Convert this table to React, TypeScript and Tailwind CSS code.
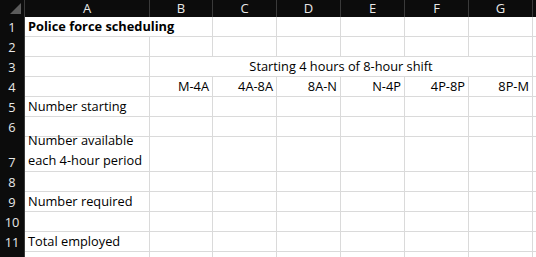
const cols = ["A", "B", "C", "D", "E", "F", "G"];
const shifts = ["M-4A", "4A-8A", "8A-N", "N-4P", "4P-8P", "8P-M"];

const cell =
  "min-w-0 whitespace-nowrap border-r border-b border-[#dadada] bg-white flex items-end px-[3px] pb-[1px] leading-[18px]";
const rowHead =
  "bg-[#0c0c0c] text-[#e8e8e8] border-r border-[#3a3a3a] flex items-end justify-center pb-[1px] leading-[18px]";

function Blank({ n }: { n: number }) {
  return (
    <>
      {Array.from({ length: n }).map((_, i) => (
        <div key={i} className={cell} />
      ))}
    </>
  );
}

export default function App() {
  return (
    <div
      className="w-[536px] h-[257px] overflow-hidden bg-white text-[12.8px] text-black"
      style={{ fontFamily: '"Open Sans", "Liberation Sans", sans-serif' }}
    >
      <div className="grid grid-cols-[25px_125px_63px_64px_64px_64px_64px_64px_1fr] grid-rows-[17px_20px_20px_20px_20px_20px_20px_35px_20px_20px_20px_20px_20px]">
        {/* column headers */}
        <div className="bg-[#0c0c0c] border-r border-[#3a3a3a] relative">
          <div className="absolute right-[3px] bottom-[3px] w-0 h-0 border-l-[11px] border-l-transparent border-b-[11px] border-b-[#5c5c5c]" />
        </div>
        {cols.map((c) => (
          <div
            key={c}
            className="bg-[#0c0c0c] text-[#e8e8e8] border-r border-[#3a3a3a] flex items-center justify-center text-[13px] leading-none"
          >
            {c}
          </div>
        ))}
        <div className="bg-[#0c0c0c]" />

        {/* 1 */}
        <div className={rowHead}>1</div>
        <div className={`${cell} col-span-2 font-bold`}>Police force scheduling</div>
        <Blank n={6} />

        {/* 2 */}
        <div className={rowHead}>2</div>
        <Blank n={8} />

        {/* 3 */}
        <div className={rowHead}>3</div>
        <div className={cell} />
        <div className={`${cell} col-span-6 justify-center`}>Starting 4 hours of 8-hour shift</div>
        <div className={cell} />

        {/* 4 */}
        <div className={rowHead}>4</div>
        <div className={cell} />
        {shifts.map((s) => (
          <div key={s} className={`${cell} justify-end`}>
            {s}
          </div>
        ))}
        <div className={cell} />

        {/* 5 */}
        <div className={rowHead}>5</div>
        <div className={cell}>Number starting</div>
        <Blank n={7} />

        {/* 6 */}
        <div className={rowHead}>6</div>
        <Blank n={8} />

        {/* 7 - wrapped label */}
        <div className={rowHead}>7</div>
        <div className={`${cell} leading-[20px] pb-0`}>
          <span>
            Number available
            <br />
            each 4-hour period
          </span>
        </div>
        <Blank n={7} />

        {/* 8 */}
        <div className={rowHead}>8</div>
        <Blank n={8} />

        {/* 9 */}
        <div className={rowHead}>9</div>
        <div className={cell}>Number required</div>
        <Blank n={7} />

        {/* 10 */}
        <div className={rowHead}>10</div>
        <Blank n={8} />

        {/* 11 */}
        <div className={rowHead}>11</div>
        <div className={cell}>Total employed</div>
        <Blank n={7} />

        {/* 12 (only the top edge is in view) */}
        <div className={rowHead} />
        <Blank n={8} />
      </div>
    </div>
  );
}
